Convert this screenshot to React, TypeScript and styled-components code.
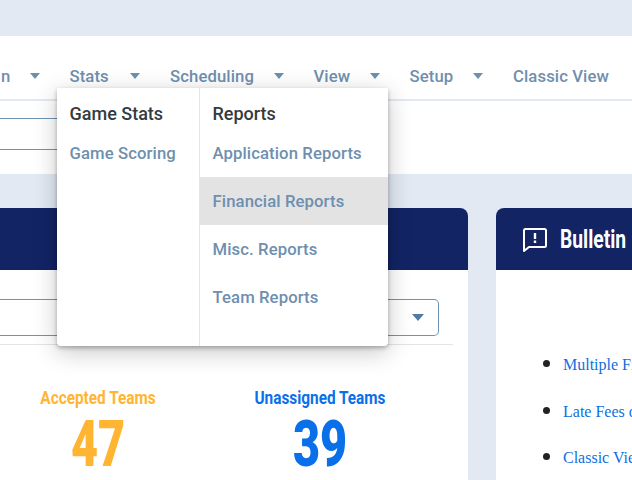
import React from 'react';
import styled, { createGlobalStyle } from 'styled-components';

const Global = createGlobalStyle`
  html, body { margin: 0; padding: 0; background: #e2e9f2; }
  body { width: 632px; height: 480px; overflow: hidden; font-family: "Roboto", "Liberation Sans", sans-serif; }
`;
const Page = styled.div`
  position: relative;
  width: 632px;
  height: 480px;
  overflow: hidden;
  background: #e2e9f2;
  padding-top: 36px;
  box-sizing: border-box;
`;
const Nav = styled.nav`
  height: 65px;
  box-sizing: border-box;
  background: #fff;
  border-bottom: 2px solid #e2e9f2;
  display: flex;
  align-items: center;
  justify-content: flex-end;
  padding: 17px 25px 0 0;
  white-space: nowrap;
`;
const NavLabel = styled.span<{ $w: number }>`
  flex: none;
  display: inline-block;
  width: ${p => p.$w}px;
  font-size: 16.7px;
  font-weight: 500;
  letter-spacing: 0.1px;
  color: #6f8fae;
`;
const Caret = styled.i`
  flex: none;
  display: block;
  width: 0;
  height: 0;
  border-left: 5.5px solid transparent;
  border-right: 5.5px solid transparent;
  border-top: 6px solid #6f8fae;
  margin: 0 30px 0 18.5px;
`;
const SubBar = styled.div`
  height: 73px;
  background: #fff;
  padding-top: 17px;
  box-sizing: border-box;
`;
const FilterField = styled.div`
  width: 300px;
  height: 32px;
  box-sizing: border-box;
  border-top: 1px solid #6f93b5;
  border-bottom: 1px solid #6f93b5;
`;
const Cards = styled.div`
  display: flex;
  gap: 28px;
  margin-top: 34px;
`;
const Card = styled.section<{ $w: number; $left?: boolean }>`
  flex: none;
  width: ${p => p.$w}px;
  height: 272px;
  background: #fff;
  border-radius: ${p => (p.$left ? '0 8px 0 0' : '8px 0 0 0')};
  overflow: hidden;
`;
const CardHeader = styled.header`
  height: 62px;
  box-sizing: border-box;
  background: #122464;
  display: flex;
  align-items: center;
  gap: 12px;
  padding-left: 26px;
`;
const CardTitle = styled.h2`
  margin: 0;
  font-size: 25px;
  font-weight: 700;
  word-spacing: 6px;
  color: #fff;
  transform: scaleX(0.77);
  transform-origin: left center;
  white-space: nowrap;
`;
const SelectRow = styled.div`
  height: 75px;
  margin-right: 15px;
  padding-top: 29px;
  box-sizing: border-box;
  border-bottom: 1px solid #e4e4e4;
`;
const SelectBox = styled.div`
  width: 439px;
  height: 37px;
  box-sizing: border-box;
  border: 1px solid #6f93b5;
  border-left: none;
  border-radius: 0 5px 5px 0;
  display: flex;
  align-items: center;
  justify-content: flex-end;
  padding-right: 14px;
`;
const SelectCaret = styled.i`
  display: block;
  width: 0;
  height: 0;
  border-left: 6.5px solid transparent;
  border-right: 6.5px solid transparent;
  border-top: 7px solid #4f7ca6;
`;
const Stats = styled.div`
  display: grid;
  grid-template-columns: 196px 248px;
  padding-top: 44px;
  text-align: center;
`;
const Stat = styled.div<{ $color: string }>`
  color: ${p => p.$color};
`;
const StatLabel = styled.div`
  font-size: 18.5px;
  line-height: 18px;
  font-weight: 700;
  transform: scaleX(0.83);
`;
const StatValue = styled.div`
  font-size: 64px;
  line-height: 76px;
  font-weight: 900;
  transform: scaleX(0.73);
`;
const BulletinList = styled.ul`
  margin: 0;
  padding: 83px 0 0 67px;
  width: 300px;
  box-sizing: border-box;
  list-style: disc;
  font-family: "Roboto", sans-serif;
  font-size: 22px;
  color: #222;
`;
const BulletinItem = styled.li`
  height: 46.5px;
  line-height: 20px;
  white-space: nowrap;
`;
const BulletinLink = styled.a`
  font-family: "Liberation Serif", serif;
  font-size: 16px;
  color: #0d6fe0;
  text-decoration: none;
`;
const Dropdown = styled.div`
  position: absolute;
  left: 57px;
  top: 88px;
  width: 331px;
  height: 258px;
  background: #fff;
  border-radius: 0 0 4px 4px;
  box-shadow: 0 6px 24px rgba(0, 0, 0, 0.22), 0 2px 4px rgba(0, 0, 0, 0.28);
  display: grid;
  grid-template-columns: 142px 189px;
  overflow: hidden;
`;
const MenuColumn = styled.div<{ $divided?: boolean }>`
  padding-top: 12px;
  border-left: ${p => (p.$divided ? '1px solid #e4e4e4' : 'none')};
`;
const MenuHeading = styled.div`
  height: 29px;
  line-height: 28px;
  padding-left: 12.5px;
  font-size: 18px;
  font-weight: 500;
  color: #343a40;
`;
const MenuItem = styled.div<{ $active?: boolean }>`
  height: 48px;
  line-height: 50px;
  padding-left: 12.5px;
  font-size: 16.7px;
  font-weight: 500;
  letter-spacing: 0.1px;
  color: #6f8fae;
  white-space: nowrap;
  background: ${p => (p.$active ? '#e3e3e3' : 'transparent')};
`;

export default function App() {
  return (
    <Page>
      <Global />
      <Nav>
        <NavLabel $w={10}>n</NavLabel><Caret />
        <NavLabel $w={42}>Stats</NavLabel><Caret />
        <NavLabel $w={85}>Scheduling</NavLabel><Caret />
        <NavLabel $w={37.5}>View</NavLabel><Caret />
        <NavLabel $w={45}>Setup</NavLabel><Caret />
        <NavLabel $w={94}>Classic View</NavLabel>
      </Nav>
      <SubBar><FilterField /></SubBar>
      <Cards>
        <Card $w={468} $left>
          <CardHeader />
          <SelectRow>
            <SelectBox><SelectCaret /></SelectBox>
          </SelectRow>
          <Stats>
            <Stat $color="#ffb432">
              <StatLabel>Accepted Teams</StatLabel>
              <StatValue>47</StatValue>
            </Stat>
            <Stat $color="#0a70ea">
              <StatLabel>Unassigned Teams</StatLabel>
              <StatValue>39</StatValue>
            </Stat>
          </Stats>
        </Card>
        <Card $w={136}>
          <CardHeader>
            <svg width="26" height="26" viewBox="0 0 26 26" fill="none" stroke="#fff" strokeWidth="2" strokeLinejoin="round" style={{ flex: 'none' }}>
              <path d="M2 4.5 a1.5 1.5 0 0 1 1.5 -1.5 h19 a1.5 1.5 0 0 1 1.5 1.5 v15 a1.5 1.5 0 0 1 -1.5 1.5 H7 L2 25 Z" />
              <path d="M13 7 v6 M13 14.5 v2.5" strokeWidth="2.4" />
            </svg>
            <CardTitle>Bulletin Board</CardTitle>
          </CardHeader>
          <BulletinList>
            <BulletinItem><BulletinLink>Multiple Fields</BulletinLink></BulletinItem>
            <BulletinItem><BulletinLink>Late Fees on</BulletinLink></BulletinItem>
            <BulletinItem><BulletinLink>Classic View</BulletinLink></BulletinItem>
          </BulletinList>
        </Card>
      </Cards>
      <Dropdown>
        <MenuColumn>
          <MenuHeading>Game Stats</MenuHeading>
          <MenuItem>Game Scoring</MenuItem>
        </MenuColumn>
        <MenuColumn $divided>
          <MenuHeading>Reports</MenuHeading>
          <MenuItem>Application Reports</MenuItem>
          <MenuItem $active>Financial Reports</MenuItem>
          <MenuItem>Misc. Reports</MenuItem>
          <MenuItem>Team Reports</MenuItem>
        </MenuColumn>
      </Dropdown>
    </Page>
  );
}
